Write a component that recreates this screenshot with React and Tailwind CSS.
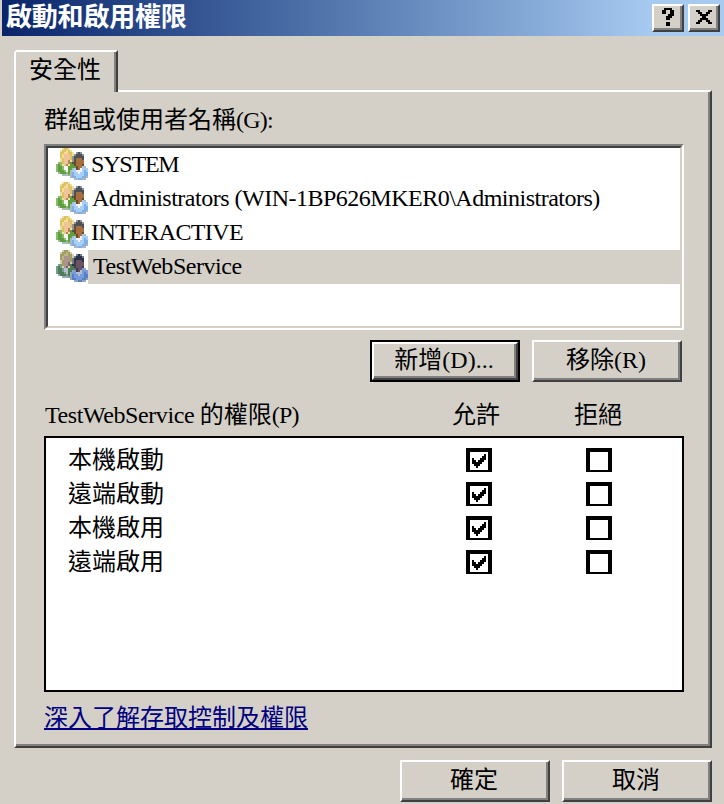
const UI = "font-['Liberation_Serif','Noto_Sans_CJK_TC',serif] leading-none whitespace-pre";

function Bar({ className = '', children }) {
  return <div className={'flex items-center ' + className}>{children}</div>;
}

function Raised({ className = '', children }) {
  return (
    <div className={'border-2 border-t-white border-l-white border-r-[#404040] border-b-[#404040] ' + className}>
      <div className="flex h-full w-full items-center justify-center border-r-2 border-b-2 border-[#808080] bg-[#d4d0c8]">
        {children}
      </div>
    </div>
  );
}

// Group icon: one character per pixel of a 16x16 grid
const pixels = [
  '...yHHy.........',
  '..yHHLHy........',
  '..HHLLHHy.dDd...',
  '..HLFFFHydDDDd..',
  '..HLFFFHdDDDDD..',
  '..yHFFFHdDSSSD..',
  '..yHFFfydsSSSS..',
  '.ggHFFfGDsSSSS..',
  'gGgyFfyGGsSSSs..',
  'gGGgWWGGGGsSSbe.',
  'gGGgWWGGebsSWbbb',
  'gGGGgWGebbWWWbBb',
  '.eGGGgGeBbbWbbBB',
  '...eeegeBbbbbbBB',
  '.......eBBbbbBBe',
  '.........eeBBee.',
];

const palette = {
  y: '#f0e0a0', H: '#dcc35f', L: '#f2dd93', F: '#eec59b', f: '#bb8452',
  g: '#8cbb6c', G: '#5d9f3a', W: '#f2f5f2', d: '#8d949b', D: '#4b5157',
  S: '#a5703f', s: '#6f452b', b: '#a8cff8', B: '#7eaee8', e: '#a9b8c6',
};

const dimPalette = {
  y: '#d5cfac', H: '#a39c62', L: '#bcb389', F: '#ac938b', f: '#7c6768',
  g: '#7b9c88', G: '#4d7c5b', W: '#b4bed0', d: '#747c90', D: '#2b3349',
  S: '#6a5360', s: '#453850', b: '#749cdc', B: '#5580c4', e: '#96a6b8',
};

function Users({ dim }) {
  const colors = dim ? dimPalette : palette;
  return (
    <svg width="32" height="32" viewBox="0 0 16 16" shapeRendering="crispEdges" className="block shrink-0">
      {pixels.flatMap((row, y) =>
        [...row].map((c, x) =>
          c === '.' ? null : <rect key={x + '-' + y} x={x} y={y} width="1" height="1" fill={colors[c]} />
        )
      )}
    </svg>
  );
}

function Check({ on }) {
  return (
    <div className="h-6 w-[26px] border-4 border-b-2 border-black bg-white">
      {on && (
        <svg width="18" height="18" viewBox="0 0 18 18" shapeRendering="crispEdges" className="block">
          <path d="M2 6h2v2h2v2h2V8h2V6h2V4h2V2h2v6h-2v2h-2v2h-2v2H8v2H6v-2H4v-2H2Z" fill="#000" />
        </svg>
      )}
    </div>
  );
}

const users = [
  ['SYSTEM', 'pl-[3px] tracking-[-1.2px]'],
  ['Administrators (WIN-1BP626MKER0\\Administrators)', 'pl-1 tracking-[-0.5px]'],
  ['INTERACTIVE', 'pl-[3px] tracking-[-0.6px]'],
  ['TestWebService', 'pl-[5px] tracking-[-0.45px]'],
];

const permissions = ['本機啟動', '遠端啟動', '本機啟用', '遠端啟用'];

export default function App() {
  return (
    <div className={'h-[804px] w-[724px] overflow-hidden bg-[#d4d0c8] text-[24px] text-black ' + UI}>
      <div className="ml-0.5 flex h-9 items-center bg-linear-to-r from-[#0a246a] to-[#a6caf0] to-90% pr-1 pl-1">
        <span className="grow text-[26px] font-bold tracking-[-0.2px] text-white">啟動和啟用權限</span>
        <Raised className="mr-1 h-7 w-8">
          <svg width="26" height="22" viewBox="0 0 26 22" shapeRendering="crispEdges">
            <path d="M10 2H18V4H20V10H18V12H16V14H12V10H14V8H16V4H12V8H8V4H10ZM12 16h4v4h-4Z" />
          </svg>
        </Raised>
        <Raised className="h-7 w-8">
          <svg width="26" height="22" viewBox="0 0 26 22" shapeRendering="crispEdges">
            <path d="M6 4h4v2h2v2h4V6h2V4h4v2h-2v2h-2v2h-2v2h2v2h2v2h2v2h-4v-2h-2v-2h-4v2h-2v2H6v-2h2v-2h2v-2h2v-2h-2V8H8V6H6Z" />
          </svg>
        </Raised>
      </div>

      <div className="ml-3.5 h-14 pt-3.5">
        <div className="relative z-10 h-[42px] w-[104px] rounded-tl-[4px] border-t-2 border-r-2 border-l-2 border-t-white border-r-[#404040] border-l-white">
          <div className="h-full border-r-2 border-[#808080] bg-[#d4d0c8] pt-[6px] pl-[13px]">安全性</div>
        </div>
      </div>

      <div className="-mt-0.5 ml-3.5 h-[658px] w-[698px] border-2 border-t-white border-r-[#404040] border-b-[#404040] border-l-white">
        <div className="flex h-full flex-col border-r-2 border-b-2 border-[#808080] pl-7">
          <Bar className="h-[52px] pt-1">
            群組或使用者名稱<span className="tracking-[-0.8px]">(G):</span>
          </Bar>
          <div className="h-[186px] w-[640px] border-2 border-t-[#808080] border-r-white border-b-white border-l-[#808080]">
            <div className="h-full border-2 border-t-[#404040] border-r-[#d4d0c8] border-b-[#d4d0c8] border-l-[#404040] bg-white pl-2">
              {users.map(([name, style], i) => (
                <div key={name} className="flex h-[34px]">
                  <Users dim={i === 3} />
                  <Bar className={'grow pb-0.5 ' + (i === 3 ? 'bg-[#d4d0c8] ' : '') + style}>{name}</Bar>
                </div>
              ))}
            </div>
          </div>
          <div className="mt-2.5 flex w-[638px] justify-end gap-3">
            <div className="h-[42px] w-[150px] border-2 border-black">
              <Raised className="h-full w-full">新增(D)...</Raised>
            </div>
            <Raised className="h-[42px] w-[150px]">移除(R)</Raised>
          </div>
          <Bar className="h-[54px] pt-3">
            <span className="w-[408px] pl-px">
              <span className="tracking-[-0.42px]">TestWebService </span>的權限
              <span className="tracking-[-0.8px]">(P)</span>
            </span>
            <span className="w-[122px]">允許</span>
            <span>拒絕</span>
          </Bar>
          <div className="h-[256px] w-[640px] border-2 border-black bg-white pt-[5px] pl-[22px]">
            {permissions.map((p) => (
              <Bar key={p} className="h-[34px]">
                <span className="w-[398px]">{p}</span>
                <span className="w-[120px]"><Check on /></span>
                <Check />
              </Bar>
            ))}
          </div>
          <div className="mt-[14px] flex">
            <span className="h-6 border-b-2 border-[#000080] text-[#000080]">深入了解存取控制及權限</span>
          </div>
        </div>
      </div>

      <div className="mt-3 flex w-[712px] justify-end gap-3">
        <Raised className="h-[42px] w-[150px]">確定</Raised>
        <Raised className="h-[42px] w-[150px]">取消</Raised>
      </div>
    </div>
  );
}
